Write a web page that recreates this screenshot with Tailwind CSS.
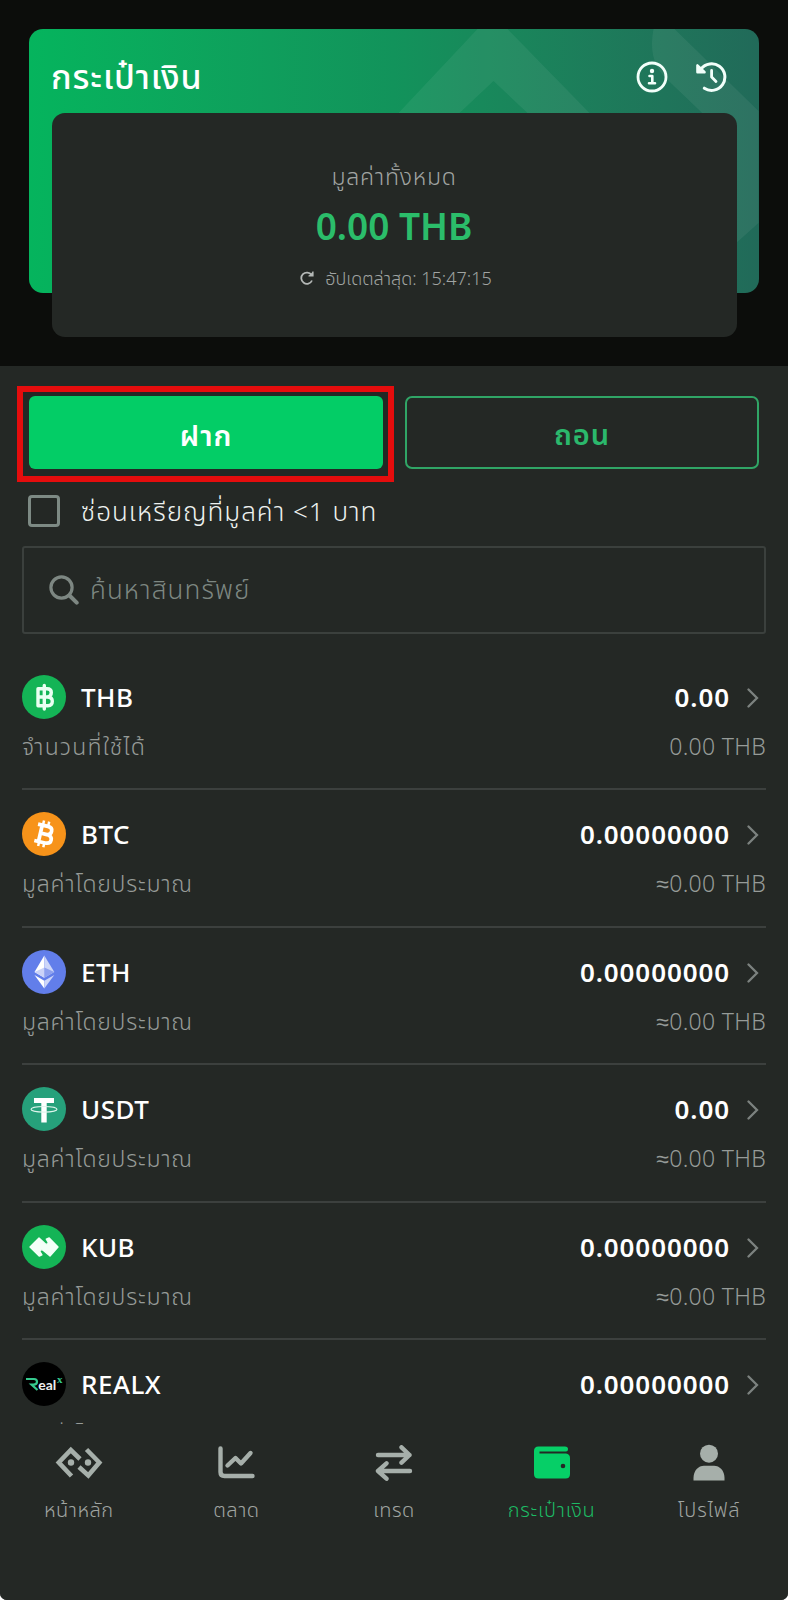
<!DOCTYPE html>
<html lang="th">
<head>
    <meta charset="UTF-8">
    <meta name="viewport" content="width=device-width, initial-scale=1.0">
    <title>กระเป๋าเงิน</title>
    <script src="https://cdn.jsdelivr.net/npm/@tailwindcss/browser@4"></script>
</head>
<body class="bg-white font-['Noto_Sans','Noto_Sans_Thai',sans-serif]">
<div class="w-[788px] h-[1600px] flex flex-col overflow-hidden rounded-b-[7px] bg-[#242825] text-white">

    <!-- Balance header -->
    <header class="h-[366px] shrink-0 bg-[#0c0d0b] px-[29px] pt-[29px]">
        <div class="relative h-[264px] rounded-[14px] bg-linear-to-r from-[#05b45d] via-[#12935b] to-[#216a59]">
            <svg class="absolute inset-0 w-full h-full rounded-[14px]" viewBox="0 0 729 264" fill="#fff" fill-opacity=".06">
                <path d="M448 0H478L560 84H498L464 52L430 84H369Z"/>
                <path d="M624 0H645L729 82V194L700 220V110L635 48Q618 30 624 0Z"/>
            </svg>
            <div class="relative h-[84px] flex items-center justify-between pl-[22px] pr-[32px]">
                <h1 class="text-[34px] tracking-[0.9px] font-medium leading-none whitespace-nowrap pt-[10px]">กระเป๋าเงิน</h1>
                <div class="flex gap-[27px] pt-[12px]">
                    <svg class="w-8 h-8" viewBox="0 0 32 32" fill="none" stroke="#f2fffa" stroke-linecap="round" stroke-linejoin="round">
                        <circle cx="16" cy="16" r="14" stroke-width="2.8"/>
                        <circle cx="16" cy="10" r="2.2" fill="#f2fffa" stroke="none"/>
                        <path d="M13.5 15H16.3V22M13 22.2H19" stroke-width="2.6"/>
                    </svg>
                    <svg class="w-8 h-8" viewBox="0 0 32 32" fill="none" stroke="#f2fffa" stroke-linecap="round" stroke-linejoin="round">
                        <path d="M6 8A13.3 13.3 0 1 1 9.3 27.2" stroke-width="3"/>
                        <path d="M2.4 4.3V11.2H9.6Z" fill="#f2fffa" stroke-width="2.4"/>
                        <path d="M16.6 9.5V16L21 20.5" stroke-width="2.8"/>
                    </svg>
                </div>
            </div>
            <div class="relative mx-[22.5px] h-[224px] rounded-[13px] bg-[#242825] flex flex-col items-center">
                <p class="mt-[45px] h-[36px] leading-[36px] text-[23px] tracking-[0.8px] font-light text-[#a0a4a2] whitespace-nowrap">มูลค่าทั้งหมด</p>
                <p class="mt-[10px] h-[44px] leading-[44px] text-[37px] font-semibold text-[#2bbd6a] whitespace-nowrap">0.00 THB</p>
                <p class="mt-[15px] h-[30px] leading-[30px] flex items-center gap-[11px] pl-[4px] text-[18px] font-light text-[#a0a4a2] whitespace-nowrap">
                    <svg class="w-[14px] h-[14px]" viewBox="0 0 14 14" fill="none" stroke="#b4b8b6" stroke-width="1.8"><path d="M11.5 4A5.6 5.6 0 1 0 12 9.5"/><path d="M13 .5V5H8.5" fill="#b4b8b6" stroke-width="1.2"/></svg>
                    <span>อัปเดตล่าสุด: 15:47:15</span>
                </p>
            </div>
        </div>
    </header>

    <!-- Actions and asset list -->
    <main class="h-[1058px] shrink-0 overflow-hidden">
        <div class="h-[113px] pt-[30px] px-[29px] flex gap-[22px]">
            <button class="relative h-[73px] w-[354px] shrink-0 rounded-[6px] bg-[#03cd66] text-[29px] tracking-[1px] font-semibold">
                <span class="relative top-[2px]">ฝาก</span>
                <span class="absolute -left-[12px] -right-[11px] -top-[10px] -bottom-[13px] border-[6px] border-[#e50d0d]"></span>
            </button>
            <button class="h-[73px] w-[354px] shrink-0 rounded-[7px] border-2 border-[#30a566] text-[29px] tracking-[1px] font-semibold text-[#2bb86c] pt-[3px]">ถอน</button>
        </div>

        <label class="h-[67px] pb-[4px] px-[28px] flex items-center gap-[21px]">
            <span class="w-[32px] h-[32px] rounded-[4px] border-[3px] border-[#7d8a84]"></span>
            <span class="text-[26px] tracking-[1px] font-light leading-[40px] whitespace-nowrap text-[#eef2f0]">ซ่อนเหรียญที่มูลค่า &lt;1 บาท</span>
        </label>

        <div class="mx-[22px] h-[88px] rounded-[3px] border-2 border-[#3b403d] flex items-center pl-[25px] gap-[11px]">
            <svg class="w-[30px] h-[30px]" viewBox="0 0 30 30" fill="none" stroke="#7d8782" stroke-linecap="round"><circle cx="12.5" cy="12.5" r="10.6" stroke-width="3.2"/><path d="M20.5 20.5L27.7 27.7" stroke-width="4"/></svg>
            <span class="text-[26px] tracking-[1.1px] font-light leading-[40px] pb-[2px] whitespace-nowrap text-[#7d8782]">ค้นหาสินทรัพย์</span>
        </div>

        <ul id="assets" class="mt-[19px] px-[22px]"></ul>
    </main>

    <!-- Bottom navigation -->
    <nav class="flex-1 pt-[21px] grid grid-cols-5 text-[20px] tracking-[0.5px] font-light text-[#a0a5a2] bg-[#242825]">
        <a class="flex flex-col items-center">
            <svg class="w-[48px] h-[36px]" viewBox="0 0 48 36" fill="none" stroke="#a6afaa" stroke-width="4.6"><path d="M16.5 31L3.8 17.5L15.8 5L25 14"/><path d="M31.5 4.5L44.3 17.5L33.3 30.5L24 22"/><g fill="#a6afaa" stroke="none"><circle cx="16" cy="17.5" r="3.2"/><circle cx="33" cy="17.5" r="3.2"/></g></svg>
            <span class="mt-[13px] leading-[32px] whitespace-nowrap">หน้าหลัก</span>
        </a>
        <a class="flex flex-col items-center">
            <svg class="w-[38px] h-[36px]" viewBox="0 0 38 36" fill="none" stroke="#a6afaa" stroke-width="4.4" stroke-linecap="round" stroke-linejoin="round"><path d="M3.5 3.5V27Q3.5 31 7.5 31H35.5M10.5 20.5L18.5 13L24 18.5L33.5 8"/></svg>
            <span class="mt-[13px] leading-[32px] whitespace-nowrap">ตลาด</span>
        </a>
        <a class="flex flex-col items-center">
            <svg class="w-[38px] h-[38px] -mb-[2px]" viewBox="0 0 38 38" fill="none" stroke="#a6afaa" stroke-width="4.4" stroke-linecap="round" stroke-linejoin="round"><path d="M3 10H34.5M26.5 2.3L34.5 10L26.5 17.7M35 26H3M11.5 18.3L3 26L11.5 33.7"/></svg>
            <span class="mt-[13px] leading-[32px] whitespace-nowrap">เทรด</span>
        </a>
        <a class="flex flex-col items-center text-[#1dba64]">
            <svg class="w-[38px] h-[36px]" viewBox="0 0 38 36"><path d="M5.5 1.5H32Q35 1.5 35 4.3Q35 6.5 33 6.5H6.5V8.5H33Q37 9 37 13V29Q37 33.5 32.5 33.5H5.5Q1 33.5 1 29V6Q1 1.5 5.5 1.5Z" fill="#06cf67"/><circle cx="30" cy="21" r="2.3" fill="#242825"/></svg>
            <span class="mt-[13px] leading-[32px] tracking-[0.7px] whitespace-nowrap">กระเป๋าเงิน</span>
        </a>
        <a class="flex flex-col items-center">
            <svg class="w-[32px] h-[36px] overflow-visible" viewBox="0 0 32 36" fill="#a6afaa"><circle cx="16" cy="8.7" r="9"/><path d="M.5 35.5V33C.5 25.5 5.5 20.8 11 20.8H21C26.5 20.8 31.5 25.5 31.5 33V35.5Z"/></svg>
            <span class="mt-[13px] leading-[32px] tracking-[0.9px] whitespace-nowrap">โปรไฟล์</span>
        </a>
    </nav>
</div>

<script>
    const approx = 'มูลค่าโดยประมาณ';
    const assets = [
        { name: 'THB', amount: '0.00', label: 'จำนวนที่ใช้ได้', value: '0.00 THB',
          icon: '<circle cx="22" cy="22" r="22" fill="#14b456"/><path d="M16 13.8H25Q29.3 13.8 29.3 17.6Q29.3 21.5 25.5 22Q30.3 22 30.3 26.3Q30.3 30.7 26 30.7H16ZM16 22H26M22.3 10.5V34" fill="none" stroke="#eafff2" stroke-width="3.4" stroke-linejoin="round" stroke-linecap="round"/>' },
        { name: 'BTC', amount: '0.00000000', label: approx, value: '≈0.00 THB',
          icon: '<circle cx="22" cy="22" r="22" fill="#f7931a"/><g transform="rotate(13 22 22)" fill="none" stroke="#fff"><path d="M14 13.7H24Q28.8 13.7 28.8 17.7Q28.8 21.7 24.5 21.9Q30.3 22 30.3 26.3Q30.3 30.5 25 30.5H14M18.3 14V30M18.3 21.9H25" stroke-width="3.7"/><path d="M19 8.8V13M24.3 8.8V13M19 31V35M24.3 31V35" stroke-width="2.5"/></g>' },
        { name: 'ETH', amount: '0.00000000', label: approx, value: '≈0.00 THB',
          icon: '<circle cx="22" cy="22" r="22" fill="#627eea"/><path d="M22.3 5.5L12.5 22L22.3 27.8Z" fill="#fff"/><path d="M22.3 5.5L32.3 22L22.3 27.8Z" fill="#cdd6f9"/><path d="M12.5 22L22.3 17.5V27.8Z" fill="#cbd3f8"/><path d="M32.3 22L22.3 17.5V27.8Z" fill="#8da0ef"/><path d="M12.5 25L22.3 30.7V38.5Z" fill="#fff"/><path d="M32.3 25L22.3 30.7V38.5Z" fill="#cdd6f9"/>' },
        { name: 'USDT', amount: '0.00', label: approx, value: '≈0.00 THB',
          icon: '<circle cx="22" cy="22" r="22" fill="#26a17b"/><path d="M12 11H32V16H24.7V35.5H19.3V16H12Z" fill="#fff"/><ellipse cx="22" cy="22.3" rx="13" ry="2.8" fill="none" stroke="#dff5ec" stroke-width="1.1"/>' },
        { name: 'KUB', amount: '0.00000000', label: approx, value: '≈0.00 THB',
          icon: '<circle cx="22" cy="22" r="22" fill="#14b456"/><path d="M17 13L23.5 19Q26.8 19.8 26 17L24.3 14.2L27.2 13L36 22L28 31L20.8 25Q17.4 24.2 18.2 27L19.9 29.8L17.2 31L8 22Z" fill="#f3fff8" stroke="#f3fff8" stroke-width="1.4" stroke-linejoin="round"/>' },
        { name: 'REALX', amount: '0.00000000', label: approx, value: '≈0.00 THB',
          icon: '<circle cx="22" cy="22" r="22" fill="#000"/><path d="M4 17H12Q15 17 15 19.8Q15 22.6 11.5 22.6H9.5L15.5 28" fill="none" stroke="#35c98e" stroke-width="2.2"/><text x="16.2" y="28.3" font-size="12.5" letter-spacing="0" font-weight="700" font-family="Lato, sans-serif" fill="#eee" textLength="18" lengthAdjust="spacingAndGlyphs">eal</text><text x="35" y="20.7" font-size="11" font-weight="700" font-family="Liberation Serif, serif" fill="#35c98e">x</text>' }
    ];

    document.getElementById('assets').innerHTML = assets.map(a => `
        <li class="h-[137.4px] border-b-2 border-[#3c403e] pt-[22px]">
            <div class="flex items-center h-[44px]">
                <svg class="w-[44px] h-[44px] shrink-0" viewBox="0 0 44 44">${a.icon}</svg>
                <span class="ml-[15px] text-[26px] tracking-[0.5px] leading-[44px] font-medium whitespace-nowrap">${a.name}</span>
                <span class="ml-auto text-[26px] tracking-[0.9px] leading-[44px] font-semibold whitespace-nowrap">${a.amount}</span>
                <svg class="ml-[17px] mr-[7px] mt-[2px] w-[12px] h-[20px]" viewBox="0 0 12 20" fill="none" stroke="#7c827f" stroke-width="2.3" stroke-linecap="round"><path d="M1.5 1.5L10 10L1.5 18.5"/></svg>
            </div>
            <div class="flex justify-between h-[36px] mt-[9px] text-[23px] leading-[36px] font-light text-[#969b98]">
                <span class="${a.label === approx ? 'tracking-[0.75px]' : 'tracking-[1.2px]'} whitespace-nowrap">${a.label}</span>
                <span class="tracking-[0.3px] whitespace-nowrap">${a.value}</span>
            </div>
        </li>`).join('');
</script>
</body>
</html>
